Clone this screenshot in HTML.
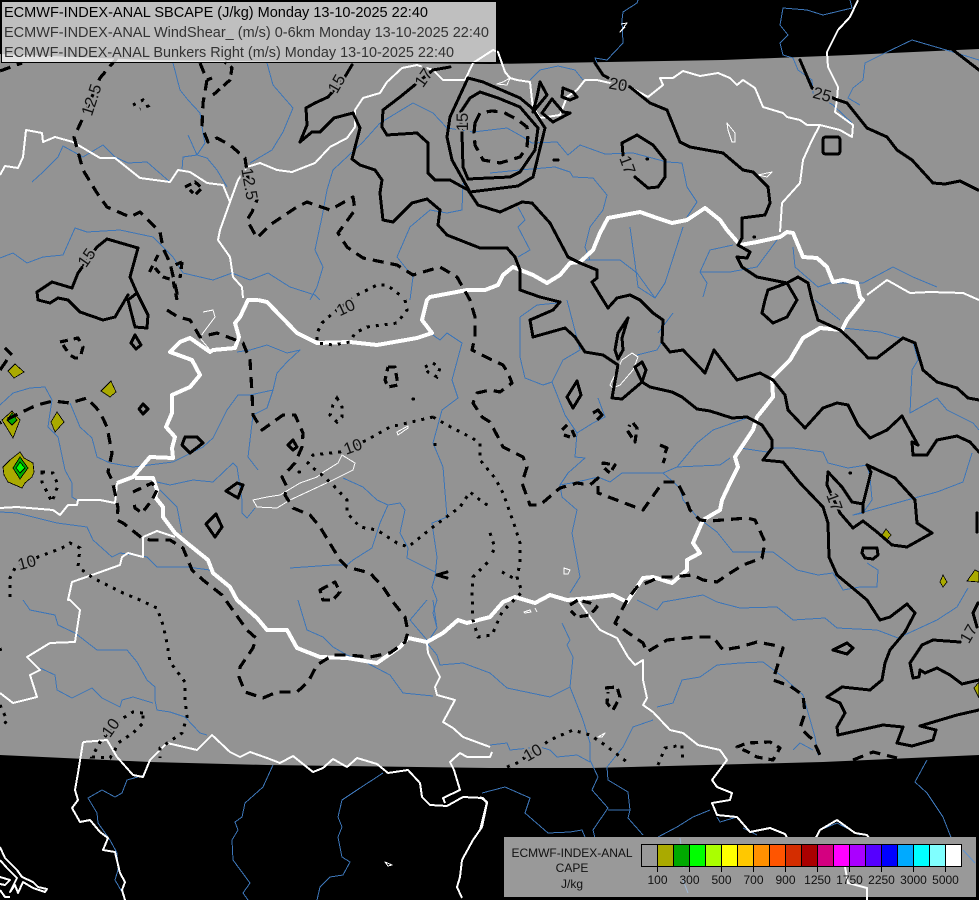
<!DOCTYPE html>
<html><head><meta charset="utf-8"><title>ECMWF CAPE</title>
<style>
html,body{margin:0;padding:0;background:#000;width:979px;height:900px;overflow:hidden}
svg{display:block;font-family:"Liberation Sans",sans-serif}
.r,.b,.t,.w,.s,.d,.p,.y{shape-rendering:crispEdges}
.r path{fill:none;stroke:#3d76b8;stroke-width:1;stroke-linejoin:round}
.b path{fill:none;stroke:#fff;stroke-width:2;stroke-linejoin:round}
.t path{fill:none;stroke:#fff;stroke-width:4;stroke-linejoin:round}
.w path{fill:none;stroke:#fff;stroke-width:1;stroke-linejoin:round}
.s path{fill:none;stroke:#000;stroke-width:3;stroke-linejoin:round;stroke-linecap:round}
.d path{fill:none;stroke:#000;stroke-width:3.2;stroke-dasharray:11 7;stroke-linejoin:round}
.p path{fill:none;stroke:#000;stroke-width:3;stroke-dasharray:3 6}
.y path{fill:#aaaa00;stroke:#000;stroke-width:.8}
.l text{font-size:16.5px;fill:#111;stroke:#939393;stroke-width:4;paint-order:stroke;text-anchor:middle}
</style></head><body>
<svg width="979" height="900" viewBox="0 0 979 900" xmlns="http://www.w3.org/2000/svg">
<rect width="979" height="900" fill="#000"/>
<path d="M0,54 L150,60 L300,62 L490,64 L723,60 L850,55 L979,49 L979,755 L823,762 L590,768 L490,768 L267,765 L150,762 L0,755 Z" fill="#939393"/>
<g class="r">
<path d="M173,63L180,90L188,100L200,113L203,133L205,143L197,155L188,135M197,155L183,157L182,170M197,155L207,158L217,170L227,187"/>
<path d="M267,63L273,85L293,108L283,132L272,150L250,163"/>
<path d="M32,182L43,172L58,157L63,146L83,157L103,145L115,157L128,163L147,162L170,182"/>
<path d="M0,258L13,253L27,263L43,257L63,255L75,228L87,232L120,230L153,237L173,257L183,273L213,280L232,273L250,280L268,273L290,287L315,295L320,300"/>
<path d="M380,123L363,142L333,170L327,190L322,217L315,250L323,267L317,287L310,300"/>
<path d="M380,123L413,103L433,113L447,128L473,132L490,130L507,128L523,137L532,143L557,142L568,155L580,145L605,154L633,153L667,162L682,163L687,187L697,202L687,217"/>
<path d="M490,173L520,170L555,167L570,172L573,177L593,178L607,195L603,210L590,227L585,247L590,260"/>
<path d="M463,183L462,210L447,213L430,210L410,227L397,257L413,277L410,300"/>
<path d="M630,227L635,263L638,287L655,298L665,283L683,227"/>
<path d="M518,207L525,220L518,227L530,250L518,257"/>
<path d="M583,260L620,260L637,273L655,298"/>
<path d="M777,240L757,267L730,272L700,272L710,250L733,245M700,272L707,283L703,297"/>
<path d="M793,247L795,267L818,287L830,283L863,283L893,267L913,277L937,287"/>
<path d="M860,105L848,98L853,88L863,80L865,63L887,52L912,40L953,52L979,60"/>
<path d="M850,0L852,8L823,15L807,10L783,8L780,25L788,35L780,43L783,55L793,58L798,70L812,80L813,93L833,105L852,123"/>
<path d="M638,0L637,3L623,12L622,20L623,43L607,60L595,58L597,63"/>
<path d="M530,80L540,70L558,66L575,70L583,80"/>
<path d="M0,405L13,393L30,388L45,387L52,400L50,413L48,427L58,437L65,470L72,483L72,497L77,500"/>
<path d="M70,403L80,427L92,438L97,457L110,463L133,467L173,462L203,447L213,438L227,410L238,395L250,395L273,390L277,373L287,362L300,350L287,353L267,345L250,350L237,352"/>
<path d="M273,390L267,408L253,415L248,457L258,470"/>
<path d="M157,482L170,485L193,480L213,482L233,463L237,467L242,500L242,513L247,518L255,508"/>
<path d="M160,490L177,507L182,533"/>
<path d="M0,512L17,513L57,523L87,527L93,540L112,557L120,553L147,557L157,567L187,567L210,570"/>
<path d="M23,600L30,610L55,615L58,625L75,633L97,650L127,650L137,662L147,680L155,687L155,700L157,710L170,712L185,717L200,733L207,735"/>
<path d="M40,668L55,675L57,690L72,698L92,688L102,698L120,707L122,700L133,697L153,703"/>
<path d="M290,568L333,565L347,565L353,560L372,548L380,523L388,505L400,503L405,510L400,533L408,548L407,558L435,572"/>
<path d="M343,478L363,487L377,500L388,505"/>
<path d="M430,333L440,340L447,333L462,343L452,380L458,398L442,410L433,443L443,467L447,517L432,523L437,557L435,577L432,587L437,600L433,613L437,628L427,643L437,655L440,665L463,663L490,673L507,688L550,697L560,692L570,687"/>
<path d="M367,663L390,675L403,693L433,696"/>
<path d="M298,600L307,630L323,637L333,647L347,655L367,663"/>
<path d="M427,600L410,620L427,640M433,600L437,628"/>
<path d="M562,623L570,640L567,645L573,657L570,687L583,720L590,743L590,762"/>
<path d="M657,707L673,703L682,680L700,677L717,665L740,663L763,662L783,677L803,695L815,737L818,755"/>
<path d="M653,720L633,727L623,747L607,767"/>
<path d="M793,750L800,743L813,750"/>
<path d="M490,745L507,743L510,750L540,747L550,750L557,757L577,755L590,762"/>
<path d="M637,600L657,610L663,602L703,595L717,602L740,608L777,607L793,620L825,618L837,628L877,630L898,638L937,620L957,607L968,588"/>
<path d="M677,467L663,473L622,473L610,482L598,477L577,482L560,485L562,497L577,510L572,533L580,577L570,593"/>
<path d="M663,473L680,488L683,500L697,517L717,532L733,552L773,552L797,570L818,575L833,573L843,590L860,587L877,587L878,570L867,563"/>
<path d="M677,467L697,443L713,430L747,418"/>
<path d="M677,467L720,465L730,458"/>
<path d="M740,448L767,452L773,448L793,448L823,452L828,463L848,468L867,465L870,477L872,500L863,513L853,515L907,500L937,492L963,482L972,453"/>
<path d="M843,328L880,332L913,342L918,360L912,370L910,413L937,398L947,410L973,423L979,430"/>
<path d="M520,317L520,357L525,378L543,385L552,382L563,360L580,350L573,323L567,300"/>
<path d="M552,382L565,415L577,433L575,457L585,458L568,473L560,485"/>
<path d="M598,398L605,417L593,423L577,433"/>
<path d="M663,340L657,350L637,355M658,333L673,313M520,317L537,305L557,303"/>
<path d="M815,300L840,320"/>
<path d="M145,775L127,780L122,793L115,797L102,790L88,798L97,813L98,823L110,840L117,853L118,870L115,880L122,892"/>
<path d="M273,765L263,787L245,803L242,817L235,822L238,830L232,840L233,860L250,883L243,893L248,900"/>
<path d="M383,773L357,790L342,800L338,817L342,827L338,837L342,857L350,862L343,875L330,877L320,887L317,900"/>
<path d="M482,793L505,787L530,798L525,813L548,833L570,832L582,830L585,837"/>
<path d="M590,760L598,777L592,790L608,808L593,830L595,838"/>
<path d="M607,767L608,780L628,792L630,810L608,810M630,810L628,818L643,835"/>
<path d="M710,810L693,817L677,827L658,837"/>
<path d="M717,817L720,822L737,817M743,828L757,835"/>
<path d="M820,830L837,823L860,835"/>
<path d="M927,760L915,782L927,793L943,817L952,840M963,850L975,863"/>
</g>
<g class="b">
<path d="M0,175L5,166L18,168L23,157L26,130L42,133L43,142L55,137L73,142L100,158L115,158L140,178L170,182L178,170L190,172L207,183L223,185L230,202L238,180L247,167L260,163L277,170L292,172L315,163L330,147L347,138L355,127L355,110L363,98L380,93L387,82L402,68L417,65L433,70L443,80L465,80L473,63L493,50L498,52L505,72L510,78L517,80L530,82L532,100L533,107L540,118L560,115L563,107L567,97L577,90L585,80L597,80L610,83L630,87L648,97L663,85L660,78L673,78L683,71L700,76L718,73L730,78L737,85L743,80L755,88L763,107L783,113L787,117L800,120L807,125L820,125L840,130L852,137L853,125L835,112L837,100L838,87L828,67L827,52L838,30L850,17L858,0"/>
<path d="M230,202L220,230L218,240L230,257L233,277L242,287L243,298"/>
<path d="M820,125L812,140L803,160L800,183L782,203L780,232"/>
<path d="M867,295L887,280L910,293L930,292L963,293L979,300"/>
<path d="M0,508L17,507L53,510L60,515L68,505L77,505L78,500L100,500L115,503L117,483"/>
<path d="M143,537L157,531L175,537M143,537L143,557L128,553L122,557L120,565L92,575L72,582L68,600L70,600L80,610L75,642L50,643L27,657L40,670L30,675L37,697L13,703L0,693"/>
<path d="M83,742L107,740L117,757L133,775L143,777L150,760L167,743L197,750L212,735L230,752L240,757L250,752L267,758L280,763L293,756L313,772L323,768L333,759L347,767L357,758L377,764L388,773L408,770L420,783L422,797L430,805L447,806L463,797L483,798L487,803L482,827L473,840L462,860L460,877L457,887L462,898"/>
<path d="M83,742L78,773L75,790L78,800L72,808L80,822L90,820L100,832L108,838L103,850L115,852L120,873L125,882L122,890L125,900"/>
<path d="M445,803L443,798L460,790L454,770L450,762L460,753L467,757L490,757L492,752"/>
<path d="M427,643L428,653L440,677L435,687L437,695L455,700L443,722L453,728L463,737L490,747"/>
<path d="M578,600L590,617L600,630L617,638L628,657L635,665L643,660L643,680L647,698L643,705L653,712L670,730L683,733L698,745L720,750L727,760L712,780L717,787L732,793L730,800L712,803L717,815L737,817L750,832L770,828L785,834L790,843"/>
<path d="M813,843L820,830L837,820L855,833L867,835L872,843"/>
<path d="M480,797L487,802L480,830"/>
<path d="M0,847L5,858L17,870L22,877L33,882L38,887L47,889L45,892L33,888L23,882L18,893L15,885L10,892L17,878L7,868L0,860"/>
<path d="M0,877L10,880L5,885L0,884M0,890L5,897L10,897"/>
</g>
<g class="t">
<path d="M258,300L248,300L240,317L235,323L239,337L235,348L213,350L210,352L200,345L190,338L180,342L170,352L192,360L200,375L190,387L172,395L172,413L166,427L175,437L172,448L173,458L150,457L133,477L117,483M135,478L153,478L157,490L155,497L163,507L163,517L175,533L187,543L208,560L213,573L230,587L237,600L257,618L267,630L287,630L297,648L320,657L347,658L377,663L400,647L408,638L427,642L443,633L458,620L467,623L490,617L503,602L515,597L535,603L550,595L567,600L590,598L613,595L627,602L643,578L653,577L672,583L687,570L687,560L700,553L693,543L703,520L720,510L722,500L730,483L738,467L735,457L753,430L757,417L773,397L772,378L790,360L803,338L820,328L842,330L847,320L863,300L860,297L857,283L843,280L833,282L827,267L817,258L803,257L793,233L787,232L780,237L757,242L740,245L727,230L720,220L705,208L687,220L672,223L657,218L640,212L608,218L600,233L593,250L580,262L570,263L560,275L547,283L533,275L513,267L503,275L498,285L485,290L467,290L430,297L427,300L422,320L432,333L417,338L377,345L350,342L317,343L297,333L267,302L258,300"/>
</g>
<g class="w">
<path d="M253,500L257,507L277,508L290,500L333,480L353,470L355,463L342,455L338,463L322,473L317,477L300,483L280,495L267,497Z"/>
<path d="M203,312L213,310L215,317L203,333L200,338L210,350"/>
<path d="M397,432L408,426L408,428L398,435Z"/>
<path d="M610,385L622,360L632,353L638,357L633,370L620,385L613,388Z"/>
<path d="M727,123L735,133L735,142L732,142L728,130Z"/>
<path d="M758,175L772,172L767,177Z"/>
<path d="M564,568L570,570L568,574L564,574Z"/>
<path d="M524,612L530,610L531,612L525,613ZM535,608L537,612"/>
<path d="M598,737L605,733L602,737Z"/>
<path d="M385,862L392,865L388,866Z"/>
<path d="M621,24L627,23L620,32L625,27"/>
<path d="M503,82L510,78L507,85L497,84Z"/>
</g>
<g class="y">
<path d="M15,364L24,372L14,378L8,371Z"/>
<path d="M111,381L116,392L110,397L101,391Z"/>
<path d="M57,412L64,422L55,432L51,422Z"/>
<path d="M12,411L20,420L13,438L2,420Z"/>
<path d="M12,413L17,420L12,425L7,420Z" style="fill:#00aa00"/>
<path d="M20,452L24,458L33,463L34,472L32,477L25,483L22,488L15,485L8,482L4,475L3,467L10,460Z"/>
<path d="M20,457L28,468L20,479L13,468Z" style="fill:#00aa00"/>
<path d="M20,462L25,468L20,473L16,468Z" style="fill:#00ff00"/>
<path d="M886,529L891,535L886,541L882,535Z"/>
<path d="M943,575L947,582L943,587L940,582Z"/>
<path d="M975,570L979,572L979,582L967,581Z"/>
<path d="M979,682L974,688L979,698Z"/>
</g>
<g class="s">
<path d="M352,65L343,80L328,97L315,103L306,108L307,125L300,142L312,132L320,132L334,118L353,113L360,128L352,159L360,165L375,170L382,180L380,193L383,220L393,222L412,203L427,199L440,210L438,225L447,235L480,248L507,248L515,257L520,270L520,290L540,297L560,302L553,310L530,320L533,337L565,328L575,337L585,352L603,355L618,365L612,398L622,399L642,382L646,370L642,362L635,367L642,382L650,387L672,392L682,397L697,409L710,411L732,418L747,417L762,425L772,440L772,448L763,460L783,462L800,483L823,507L828,523L829,557L837,575L867,600L880,620L890,617L907,604L915,613L905,632L890,650L885,663L882,680L870,690L842,687L827,697L840,703L845,713L837,727L838,735L883,725L903,727L897,743L912,746L933,740L936,730L920,726L957,715L979,710"/>
<path d="M450,67L433,70L400,97L383,110L382,127L387,135L417,133L428,143L428,173L435,180L450,180L468,190L478,205L500,212L522,202L532,203L550,223L568,257L580,263L597,270L597,278L592,282L603,300L608,308L617,298L630,295L640,300L653,313L663,320L662,342L670,352L683,350L705,373L714,350L737,380L760,373L773,380L785,395L788,410L805,428L823,408L837,403L848,405L858,425L870,438L887,430L902,416L908,427L918,445L912,442L913,455L927,455L937,440L957,436L970,442L979,452"/>
<path d="M595,63L603,75L612,80L630,87L640,95L650,103L667,110L680,142L690,147L723,153L743,170L753,172L768,187L770,203L765,215L742,218L742,238L738,245L750,252L747,258L737,257L742,267L757,277L787,283L798,277L808,283L812,300L818,320L840,330L853,342L868,358L877,358L903,338L915,343L923,370L937,382L957,388L968,398L979,400"/>
<path d="M787,283L768,290L765,300L762,313L773,323L787,317L797,300Z"/>
<path d="M800,60L812,88L835,99L847,103L867,128L887,137L897,150L912,160L933,183L945,184L960,181L978,190"/>
<path d="M953,50L979,70"/>
<path d="M826,137H837Q840,137 840,140V151Q840,154 837,154H826Q823,154 823,151V140Q823,137 826,137Z"/>
<path d="M623,155L622,143L637,135L653,145L665,160L665,177L658,187L648,188L635,177"/>
<path d="M468,78L483,82L520,98L532,108L545,128L533,177L518,186L470,192L452,160L447,137L450,117Z"/>
<path d="M480,92L498,98L520,107L538,128L535,150L520,172L510,177L468,179L463,167L462,133L460,113L470,98Z"/>
<path d="M540,82L547,95L533,112L537,97Z"/>
<path d="M552,99L563,112L570,113L553,122L542,113Z"/>
<path d="M563,88L573,92L577,97L570,100L562,97Z"/>
<path d="M107,239L138,248L130,277L137,293L128,300L135,327L147,328L148,315L137,293"/>
<path d="M107,239L97,247L78,273L72,288L52,282L37,292L38,300L50,303L58,298L68,300L80,312L103,320L115,317L128,295"/>
<path d="M135,335L141,345L136,349L131,343Z"/>
<path d="M143,404L148,409L143,414L139,409Z"/>
<path d="M185,437L197,437L203,443L190,453L182,445Z"/>
<path d="M237,483L243,485L238,498L226,491Z"/>
<path d="M216,514L222,527L215,537L206,524Z"/>
<path d="M293,440L297,447L293,450L288,445Z"/>
<path d="M628,318L618,333L615,350L618,359L623,350L622,338Z"/>
<path d="M577,381L581,395L573,408L567,397Z"/>
<path d="M867,465L895,478L915,500L917,523L932,533L907,547L892,545L877,532L863,521L853,528L840,513L827,485L828,472L842,487L852,502L863,504L863,512M863,504L871,472L867,465"/>
<path d="M863,548L877,548L878,555L873,559L865,558L862,553Z"/>
<path d="M833,650L847,643L853,648L847,654Z"/>
<path d="M977,513V532"/>
<path d="M978,603L973,613L977,627M960,642L933,640L922,645L910,663L913,678L919,677L920,670L925,673L937,668L950,675L962,684L979,680"/>
<path d="M647,159h.5M754,237h.5M850,473h.5M299,472h.5M413,399h.5M554,160h4"/>
<path d="M437,575L447,572M437,575L447,578"/>
</g>
<g class="d">
<path d="M117,58L100,78L82,120L74,137L83,170L97,193L107,207L130,217L140,212L160,232L163,248L170,263L177,293L178,300"/>
<path d="M167,310L178,317L190,320L200,337L217,333L233,339L243,343L250,360L252,393L253,415L262,430L283,415L295,415L303,433L302,447L295,463L282,477L287,487L285,495L293,508L310,515L320,527L340,560L347,567L370,573L383,587L393,602L405,617L408,632L405,642L390,653L370,657L347,655L333,655L317,665L308,682L297,692L277,692L263,698L245,692L239,677L240,667L253,648L256,638L247,630L227,602L222,595L203,580L192,570L183,548L170,540L150,540L142,538L123,523L117,520L118,508L115,493L112,480L108,472L112,453L107,427L100,412L87,398L70,403L53,401L37,405L20,413L0,423"/>
<path d="M200,63L207,80L203,103L202,127L208,142L217,138L230,145L245,158L248,178L257,200L252,212L247,220L257,238L270,225L297,207L307,202L330,210L353,197L355,210L338,233L347,247L363,258L397,265L413,275L440,267L457,277L470,300L475,317L475,337L472,350L490,359L503,365L508,373L512,383L500,392L490,390L477,393L473,403L482,417L490,422L498,437L503,447L523,457L527,467L522,483L530,505L540,505L560,488L577,483L590,485L598,478L598,493L643,510L663,482L677,482L685,497L690,510L700,520L710,521L747,518L755,520L765,542L762,558L743,565L727,575L717,582L703,580L693,575L670,577L660,577L637,587L627,600L615,623L627,632L643,643L647,652L667,640L697,637L713,637L723,650L740,647L757,642L773,645L783,648L773,680L790,686L803,695L805,713L800,728L813,740L820,755"/>
<path d="M853,760L873,752L897,758"/>
<path d="M737,747L747,743L770,742L780,748L773,760L757,757L748,752Z" style="stroke-dasharray:8 6"/>
<path d="M605,688L617,687L620,697L613,710L607,703L608,692" style="stroke-dasharray:9 5"/>
<path d="M570,605L578,600L590,603L597,607L590,615L577,617L571,611" style="stroke-dasharray:9 5"/>
<path d="M475,123L480,113L492,111L503,112L518,120L527,127L528,135L527,147L520,157L500,163L483,160L475,145L474,133Z"/>
<path d="M213,95L230,80L232,68L225,62M207,80L212,78" style="stroke-dasharray:9 5"/>
<path d="M185,187L195,182L202,188L195,195L190,190" style="stroke-dasharray:7 4"/>
<path d="M0,71L22,63"/>
<path d="M158,255L148,275M155,268L163,277L173,280L177,300M182,262L175,265M182,262L180,278" style="stroke-dasharray:7 5"/>
<path d="M60,342L78,338L83,347L80,358L75,358L70,355L63,345" style="stroke-dasharray:8 6"/>
<path d="M5,348L12,355M0,370L7,360" style="stroke-dasharray:none"/>
<path d="M388,367L395,367L398,385L388,387L385,380L388,367" style="stroke-dasharray:8 5"/>
<path d="M133,492L152,483L157,490L152,500L142,513L135,508L133,500" style="stroke-dasharray:9 6"/>
<path d="M320,590L335,582L340,592L333,600L323,600Z" style="stroke-dasharray:9 5"/>
<path d="M593,413L598,410L602,415L597,420" style="stroke-dasharray:none"/>
<path d="M562,430L567,425M564,435L570,437M572,430L575,437" style="stroke-dasharray:none"/>
<path d="M633,423L637,428L635,442L627,430L630,425" style="stroke-dasharray:8 5"/>
<path d="M660,445L667,448L665,453M663,463L665,458" style="stroke-dasharray:none"/>
<path d="M603,463L615,465L610,473L603,467Z" style="stroke-dasharray:7 4"/>
</g>
<g class="p">
<path d="M405,300L407,310L397,323L367,327L355,333L350,342L333,345L317,343L317,333L322,323L333,313L357,295L377,285L387,285L400,295"/>
<path d="M433,417L390,427L367,440L340,452L313,455L308,463L313,468L322,475L333,485L347,500L347,513L360,527L377,530L397,543L408,547L433,527L460,507L470,492L480,500L490,507"/>
<path d="M433,417L447,425L472,438L480,443L480,460L495,478L503,493L515,527L520,543L520,563L517,577L522,592L502,612L492,635L478,637L473,620L472,593L473,577L490,560"/>
<path d="M490,533L495,548L490,557M502,572L517,580"/>
<path d="M435,443L435,452"/>
<path d="M42,472L53,473L58,485L52,502L42,482Z"/>
<path d="M337,398L342,407L342,417L337,422L330,415L333,405Z"/>
<path d="M425,367L433,363L440,368L437,377L428,372Z"/>
<path d="M133,105L143,100L148,106L140,109"/>
<path d="M10,597L10,578L15,568L38,557L62,548L70,543L80,548L78,567L93,578L123,593L140,600L157,608L163,625L167,643L170,662L185,682L185,700L187,717L182,733L160,748L160,758"/>
<path d="M0,648L2,656M0,705L7,720L2,728"/>
<path d="M143,713L133,712L120,720L100,742L92,757L110,758L115,750L118,743L133,733L143,723Z"/>
<path d="M507,767L517,763L550,740L573,730L590,735L605,745L627,762"/>
<path d="M658,765L665,748L682,745L683,762"/>
</g>
<g class="l">
<text transform="translate(92,100) rotate(-72)" y="5">12.5</text>
<text transform="translate(249,184) rotate(80)" y="5">12.5</text>
<text transform="translate(337,84) rotate(-60)" y="5">15</text>
<text transform="translate(87,258) rotate(-55)" y="5">15</text>
<text transform="translate(424,78) rotate(-55)" y="5">17</text>
<text transform="translate(463,122) rotate(-90)" y="5">15</text>
<text transform="translate(618,85) rotate(10)" y="5">20</text>
<text transform="translate(822,95) rotate(15)" y="5">25</text>
<text transform="translate(627,165) rotate(70)" y="5">17</text>
<text transform="translate(834,502) rotate(70)" y="5">17</text>
<text transform="translate(969,634) rotate(-60)" y="5">17</text>
<text transform="translate(346,308) rotate(-25)" y="5">10</text>
<text transform="translate(353,447) rotate(-20)" y="5">10</text>
<text transform="translate(27,563) rotate(-15)" y="5">10</text>
<text transform="translate(111,728) rotate(-55)" y="5">10</text>
<text transform="translate(533,753) rotate(-30)" y="5">10</text>
</g>
<rect x="1.5" y="1.5" width="495" height="61" fill="rgba(255,255,255,.75)" stroke="#000" stroke-width="1"/>
<text x="4" y="17" font-size="15" fill="#000" textLength="424" lengthAdjust="spacingAndGlyphs">ECMWF-INDEX-ANAL SBCAPE (J/kg) Monday 13-10-2025 22:40</text>
<text x="4" y="37" font-size="15" fill="#333" textLength="485" lengthAdjust="spacingAndGlyphs">ECMWF-INDEX-ANAL WindShear_ (m/s) 0-6km Monday 13-10-2025 22:40</text>
<text x="4" y="57" font-size="15" fill="#333" textLength="450" lengthAdjust="spacingAndGlyphs">ECMWF-INDEX-ANAL Bunkers Right (m/s) Monday 13-10-2025 22:40</text>
<rect x="504" y="837" width="472" height="60" fill="#999"/>
<path d="M845,867L848,883L867,888L867,900" fill="none" stroke="#fff" stroke-width="2"/>
<path d="M680,838L684,868M683,880L688,893" fill="none" stroke="#9db8d8" stroke-width="1"/>
<path d="M963,850L975,863" fill="none" stroke="#5d92d0" stroke-width="1"/>
<g shape-rendering="crispEdges" stroke="#000" stroke-width="1">
<rect x="641.5" y="844.5" width="16" height="22" fill="#999"/>
<rect x="657.5" y="844.5" width="16" height="22" fill="#aaaa00"/>
<rect x="673.5" y="844.5" width="16" height="22" fill="#00aa00"/>
<rect x="689.5" y="844.5" width="16" height="22" fill="#00ff00"/>
<rect x="705.5" y="844.5" width="16" height="22" fill="#aaff00"/>
<rect x="721.5" y="844.5" width="16" height="22" fill="#ffff00"/>
<rect x="737.5" y="844.5" width="16" height="22" fill="#ffc800"/>
<rect x="753.5" y="844.5" width="16" height="22" fill="#ff9000"/>
<rect x="769.5" y="844.5" width="16" height="22" fill="#ff5500"/>
<rect x="785.5" y="844.5" width="16" height="22" fill="#d42d00"/>
<rect x="801.5" y="844.5" width="16" height="22" fill="#aa0000"/>
<rect x="817.5" y="844.5" width="16" height="22" fill="#d40080"/>
<rect x="833.5" y="844.5" width="16" height="22" fill="#ff00ff"/>
<rect x="849.5" y="844.5" width="16" height="22" fill="#aa00ff"/>
<rect x="865.5" y="844.5" width="16" height="22" fill="#5500ff"/>
<rect x="881.5" y="844.5" width="16" height="22" fill="#0000ff"/>
<rect x="897.5" y="844.5" width="16" height="22" fill="#00aaff"/>
<rect x="913.5" y="844.5" width="16" height="22" fill="#00ffff"/>
<rect x="929.5" y="844.5" width="16" height="22" fill="#80ffff"/>
<rect x="945.5" y="844.5" width="16" height="22" fill="#ffffff"/>
<path d="M657.5,867V872M689.5,867V872M721.5,867V872M753.5,867V872M785.5,867V872M817.5,867V872M849.5,867V872M881.5,867V872M913.5,867V872M945.5,867V872" fill="none"/>
</g>
<g font-size="12" fill="#111" text-anchor="middle">
<text x="572" y="857" textLength="121" lengthAdjust="spacing">ECMWF-INDEX-ANAL</text>
<text x="572" y="872">CAPE</text>
<text x="572" y="888">J/kg</text>
<text x="657.5" y="884">100</text>
<text x="689.5" y="884">300</text>
<text x="721.5" y="884">500</text>
<text x="753.5" y="884">700</text>
<text x="785.5" y="884">900</text>
<text x="817.5" y="884">1250</text>
<text x="849.5" y="884">1750</text>
<text x="881.5" y="884">2250</text>
<text x="913.5" y="884">3000</text>
<text x="945.5" y="884">5000</text>
</g>
</svg>
</body></html>
